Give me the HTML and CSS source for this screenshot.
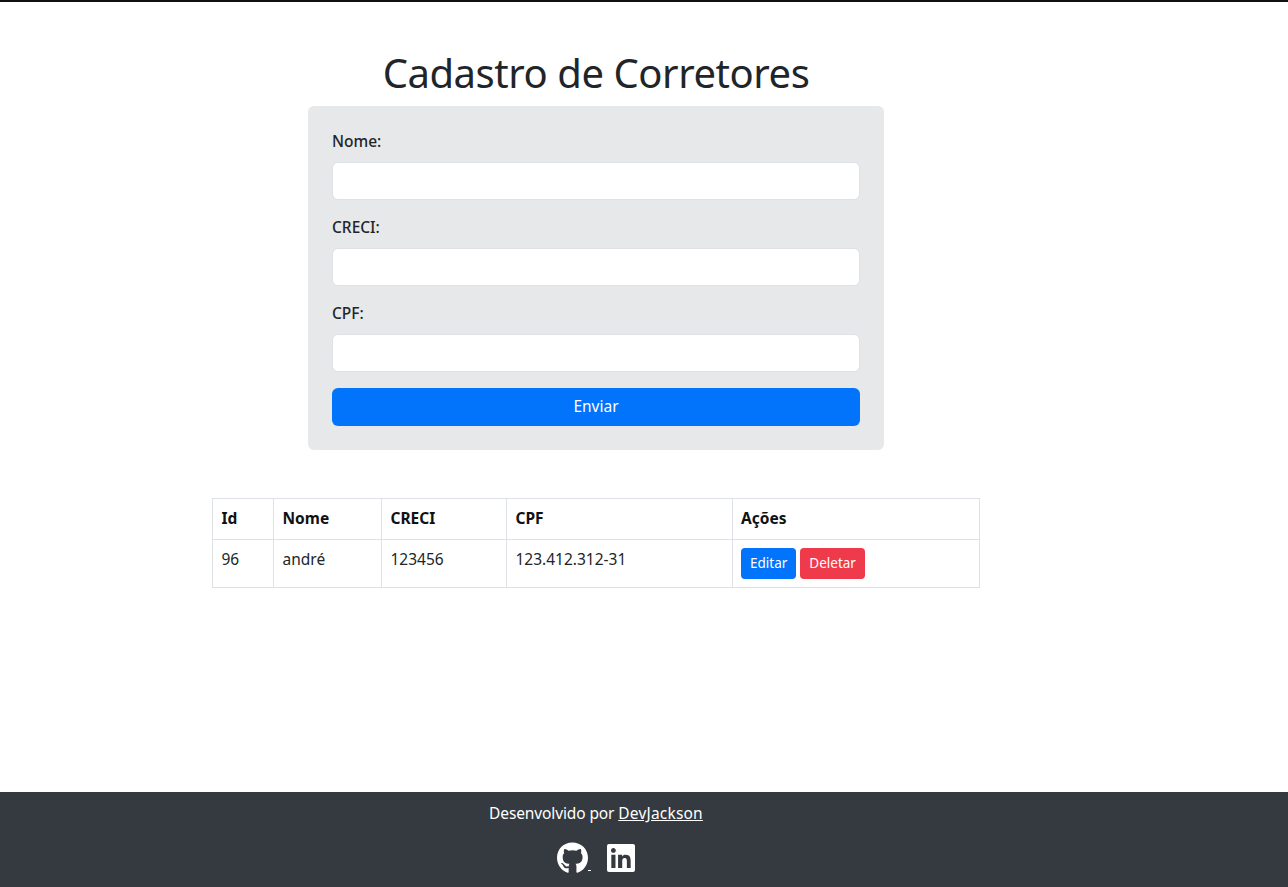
FILE: index.html
```html
<!DOCTYPE html>
<html lang="pt-BR">
<head>
<meta charset="utf-8">
<title>Cadastro de Corretores</title>
<link rel="stylesheet" href="styles.css">
</head>
<body>
<div class="topline"></div>
<main class="main">
  <h1 class="title">Cadastro de Corretores</h1>
  <form class="card">
    <div class="field"><label class="label">Nome:</label><input class="input" type="text"></div>
    <div class="field"><label class="label">CRECI:</label><input class="input" type="text"></div>
    <div class="field"><label class="label">CPF:</label><input class="input" type="text"></div>
    <button class="submit" type="button">Enviar</button>
  </form>
  <table class="table">
    <colgroup><col class="c1"><col class="c2"><col class="c3"><col class="c4"><col class="c5"></colgroup>
    <thead>
      <tr><th>Id</th><th>Nome</th><th>CRECI</th><th>CPF</th><th class="last">Ações</th></tr>
    </thead>
    <tbody>
      <tr>
        <td>96</td><td>andré</td><td>123456</td><td>123.412.312-31</td>
        <td class="last cell-actions"><div class="actions"><button class="btn blue" type="button">Editar</button><button class="btn red" type="button">Deletar</button></div></td>
      </tr>
    </tbody>
  </table>
</main>
<footer class="footer">
  <div class="footer-inner">
    <p class="credit">Desenvolvido por <a class="link" href="#">DevJackson</a></p>
    <div class="icons">
      <a class="icon-link" href="#"><svg class="icon gh" viewBox="0 0 496 512" fill="#fff"><path d="M165.9 397.4c0 2-2.3 3.6-5.2 3.6-3.3 0-5.6-1.6-5.6-3.6 0-2 2.3-3.6 5.2-3.6 3-.3 5.6 1.3 5.6 3.6zm-31.1-4.5c-.7 2 1.3 4.3 4.3 4.9 2.6 1 5.6 0 6.2-2s-1.3-4.3-4.3-5c-2.6-.7-5.5.3-6.2 2.1zm44.2-1.7c-2.9.7-4.9 2.6-4.6 4.9.3 2 2.9 3.3 5.9 2.6 2.9-.7 4.9-2.6 4.6-4.6-.3-1.9-3-3.2-5.9-2.9zM244.8 8C106.1 8 0 113.3 0 252c0 110.9 69.8 205.8 169.5 239.2 12.8 2.3 17.3-5.6 17.3-12.1 0-6.2-.3-40.4-.3-61.4 0 0-70 15-84.7-29.8 0 0-11.4-29.1-27.8-36.6 0 0-22.9-15.7 1.6-15.4 0 0 24.9 2 38.6 25.8 21.9 38.6 58.6 27.5 72.9 20.9 2.3-16 8.8-27.1 16-33.7-55.9-6.2-112.3-14.3-112.3-110.5 0-27.5 7.6-41.3 23.6-58.9-2.6-6.5-11.1-33.3 2.6-67.9 20.9-6.5 69 27 69 27 20-5.6 41.5-8.5 62.8-8.5s42.8 2.9 62.8 8.5c0 0 48.1-33.6 69-27 13.7 34.7 5.2 61.4 2.6 67.9 16 17.7 25.8 31.5 25.8 58.9 0 96.5-58.9 104.2-114.8 110.5 9.2 7.9 17 22.9 17 46.4 0 33.7-.3 75.4-.3 83.6 0 6.5 4.6 14.4 17.3 12.1C428.2 457.8 496 362.9 496 252 496 113.3 383.5 8 244.8 8z"/></svg><span class="gap-mark"></span></a>
      <a class="icon-link" href="#"><svg class="icon li" viewBox="0 0 448 512" fill="#fff"><path d="M416 32H31.9C14.3 32 0 46.5 0 64.3v383.4C0 465.5 14.3 480 31.9 480H416c17.6 0 32-14.5 32-32.3V64.3c0-17.8-14.4-32.3-32-32.3zM135.4 416H69V202.2h66.5V416zm-33.2-243c-21.3 0-38.5-17.3-38.5-38.5S80.9 96 102.2 96c21.2 0 38.5 17.3 38.5 38.5 0 21.3-17.2 38.5-38.5 38.5zm282.1 243h-66.4V312c0-24.8-.5-56.7-34.5-56.7-34.6 0-39.9 27-39.9 54.9V416h-66.4V202.2h63.7v29.2h.9c8.9-16.8 30.6-27.3 57.1-27.3 67.2 0 79.7 44.3 79.7 101.9V416z"/></svg></a>
    </div>
  </div>
</footer>
</body>
</html>
```
FILE: styles.css
```css
* { box-sizing: border-box; }
html, body { margin: 0; padding: 0; }
body {
  font-family: "Noto Sans", "Open Sans", sans-serif;
  font-size: 16px;
  line-height: 24px;
  color: #212529;
  background: #fff;
  height: 887px;
  display: flex;
  flex-direction: column;
  overflow: hidden;
}
.topline { height: 2px; background: #111; flex: none; }
.main {
  flex: 1;
  width: 1192px;
  display: flex;
  flex-direction: column;
  align-items: center;
  padding-top: 47px;
}
.title {
  margin: 0 0 9px;
  font-size: 40px;
  line-height: 48px;
  font-weight: 400;
  letter-spacing: -0.45px;
}
.card {
  width: 576px;
  padding: 24px;
  background: #e7e8ea;
  border-radius: 6px;
  display: flex;
  flex-direction: column;
}
.field { display: flex; flex-direction: column; margin-bottom: 16px; }
.label { font-weight: 500; line-height: 22px; margin-bottom: 10px; font-size: 15.5px; }
.input {
  height: 38px;
  width: 100%;
  border: 1px solid #dee2e6;
  border-radius: 6px;
  background: #fff;
  padding: 6px 12px;
  font: inherit;
}
.submit {
  height: 38px;
  border: 0;
  border-radius: 6px;
  background: #0273fb;
  color: #fff;
  font: inherit;
  font-size: 15.5px;
  padding: 0 0 2px;
}
.table {
  margin-top: 48px;
  width: 767px;
  border-collapse: collapse;
  table-layout: fixed;
  color: #212529;
}
.c1 { width: 61px; }
.c2 { width: 108px; }
.c3 { width: 125px; }
.c4 { width: 226px; }
.c5 { width: 247px; }
.table th, .table td {
  border: 1px solid #dee2e6;
  padding: 7px 8px 9px 8.5px;
  text-align: left;
  vertical-align: top;
  font-size: 15.5px;
}
.table .last { padding-left: 8px; }
.table th { font-weight: 700; color: #111; }
.table td { height: 48px; }
.table .cell-actions { padding-top: 8px; padding-bottom: 8px; }
.actions { display: flex; gap: 4px; }
.btn {
  height: 31px;
  border: 0;
  border-radius: 4px;
  padding: 0 9px 2px;
  color: #fff;
  font: inherit;
  font-size: 13.5px;
}
.blue { background: #0273fb; }
.red { background: #ee3a4a; }
.footer {
  flex: none;
  height: 95px;
  background: #343a40;
  color: #fff;
}
.footer-inner {
  width: 1192px;
  display: flex;
  flex-direction: column;
  align-items: center;
  padding-top: 9px;
}
.credit { margin: 0; font-size: 15.5px; line-height: 24px; letter-spacing: -0.12px; }
.link { color: #fff; text-decoration: underline; letter-spacing: 0.2px; }
.icons { display: flex; gap: 16px; margin-top: 17px; align-items: flex-start; }
.icon-link { color: #fff; display: flex; align-items: flex-end; }
.icon { height: 32px; display: block; }
.gh { width: 31px; }
.li { width: 28px; }
.gap-mark { width: 3px; height: 1px; background: #fff; display: block; margin-bottom: 3px; }
```
